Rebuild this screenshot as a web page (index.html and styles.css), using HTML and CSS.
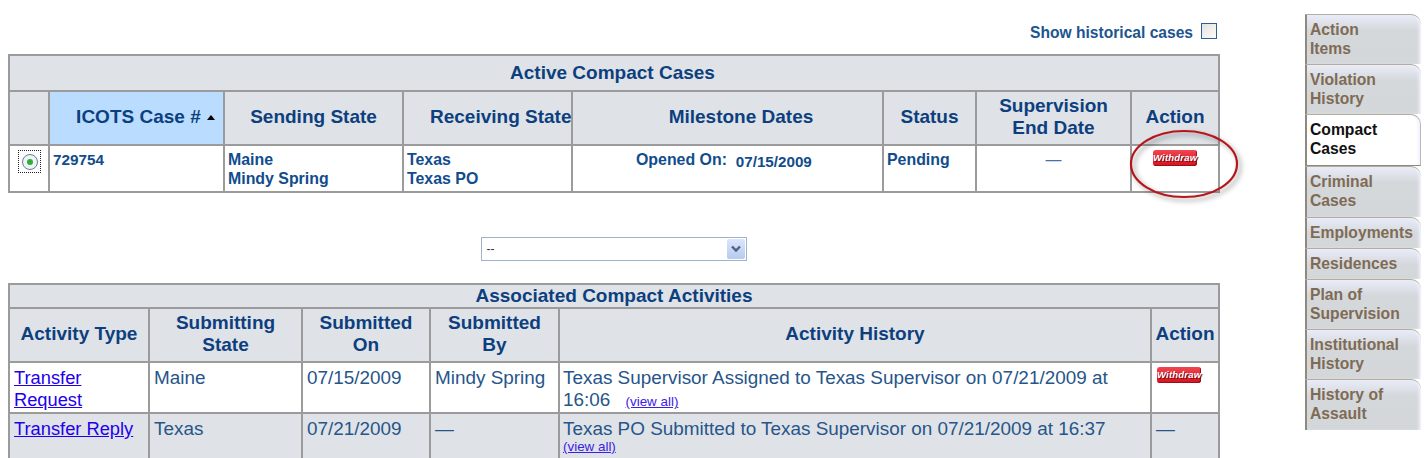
FILE: index.html
```html
<!DOCTYPE html>
<html lang="en">
<head>
<meta charset="utf-8">
<title>Compact Cases</title>
<link rel="stylesheet" href="styles.css">
</head>
<body>
<div class="page">
  <main class="main">
    <div class="historical">
      <span>Show historical cases</span>
      <span class="checkbox"></span>
    </div>

    <table class="grid cases">
      <colgroup>
        <col class="c-a1"><col class="c-a2"><col class="c-a3"><col class="c-a4"><col class="c-a5"><col class="c-a6"><col class="c-a7"><col class="c-a8">
      </colgroup>
      <thead>
        <tr class="title-row"><th colspan="8">Active Compact Cases</th></tr>
        <tr class="head-row">
          <th></th>
          <th class="sorted">ICOTS Case # <span class="sort-arrow"></span></th>
          <th>Sending State</th>
          <th class="receiving">Receiving State</th>
          <th class="off-center">Milestone Dates</th>
          <th>Status</th>
          <th>Supervision<br>End Date</th>
          <th>Action</th>
        </tr>
      </thead>
      <tbody>
        <tr class="case-row">
          <td class="radio-cell">
            <span class="radio-focus"><span class="radio"><span class="radio-dot"></span></span></span>
          </td>
          <td class="case-id">729754</td>
          <td>Maine<br>Mindy Spring</td>
          <td>Texas<br>Texas PO</td>
          <td class="milestone">Opened On:&nbsp; <span class="date">07/15/2009</span></td>
          <td>Pending</td>
          <td class="center dash">—</td>
          <td class="center"><span class="withdraw">Withdraw</span></td>
        </tr>
      </tbody>
    </table>

    <div class="select-row">
      <div class="select"><span>--</span>
        <span class="select-btn">
          <svg width="12" height="8" viewBox="0 0 12 8"><path d="M2 1.5 6 5.5 10 1.5" fill="none" stroke="#4d6185" stroke-width="2.4"/></svg>
        </span>
      </div>
    </div>

    <table class="grid activities">
      <colgroup>
        <col class="c-b1"><col class="c-b2"><col class="c-b3"><col class="c-b4"><col class="c-b5"><col class="c-b6">
      </colgroup>
      <thead>
        <tr class="title-row"><th colspan="6">Associated Compact Activities</th></tr>
        <tr class="head-row">
          <th>Activity Type</th>
          <th>Submitting<br>State</th>
          <th>Submitted<br>On</th>
          <th>Submitted<br>By</th>
          <th>Activity History</th>
          <th>Action</th>
        </tr>
      </thead>
      <tbody>
        <tr class="act-row">
          <td><a href="#">Transfer Request</a></td>
          <td>Maine</td>
          <td>07/15/2009</td>
          <td>Mindy Spring</td>
          <td class="history">Texas Supervisor Assigned to Texas Supervisor on 07/21/2009 at<br>16:06 <a class="view-all" href="#">(view all)</a></td>
          <td class="action-cell"><span class="withdraw">Withdraw</span></td>
        </tr>
        <tr class="act-row alt">
          <td><a href="#">Transfer Reply</a></td>
          <td>Texas</td>
          <td>07/21/2009</td>
          <td>—</td>
          <td class="history">Texas PO Submitted to Texas Supervisor on 07/21/2009 at 16:37<br><a class="view-all flush" href="#">(view all)</a></td>
          <td>—</td>
        </tr>
      </tbody>
    </table>
  </main>

  <nav class="tabs">
    <a class="tab" href="#">Action<br>Items</a>
    <a class="tab" href="#">Violation<br>History</a>
    <a class="tab active" href="#">Compact<br>Cases</a>
    <a class="tab" href="#">Criminal<br>Cases</a>
    <a class="tab single" href="#">Employments</a>
    <a class="tab single" href="#">Residences</a>
    <a class="tab" href="#">Plan of<br>Supervision</a>
    <a class="tab" href="#">Institutional<br>History</a>
    <a class="tab" href="#">History of<br>Assault</a>
  </nav>
</div>

<svg class="annotation" width="130" height="90" viewBox="0 0 130 90">
  <defs>
    <filter id="ring-shadow" x="-20%" y="-20%" width="140%" height="140%">
      <feDropShadow dx="3" dy="3" stdDeviation="2.5" flood-color="#000" flood-opacity=".4"/>
    </filter>
  </defs>
  <ellipse cx="59" cy="41" rx="53" ry="33" fill="none" stroke="#b5181c" stroke-width="2.2" filter="url(#ring-shadow)"/>
</svg>
</body>
</html>
```

FILE: styles.css
```css
* { box-sizing: border-box; }

html, body {
  margin: 0;
  height: 458px;
  overflow: hidden;
  background: #fff;
}

body {
  position: relative;
  font-family: "Liberation Sans", Arial, sans-serif;
  color: #0f4583;
}

.page {
  display: flex;
  align-items: flex-start;
}

.main {
  width: 1220px;
  margin-left: 8px;
  flex: none;
}

.historical {
  height: 54px;
  padding: 22px 11px 0 0;
  display: flex;
  justify-content: flex-end;
  gap: 8px;
  font-size: 15.6px;
  font-weight: bold;
  line-height: 21px;
  color: #1d5590;
}

.checkbox {
  width: 16px;
  height: 16px;
  margin-top: 1px;
  border: 1px solid #2f5f93;
  background: linear-gradient(135deg, #e3e3de, #fbfbf9);
}

.grid {
  width: 1210px;
  table-layout: fixed;
  border-collapse: collapse;
  border: 2px solid #9b9b9b;
}

.grid th, .grid td {
  border: 2px solid #9b9b9b;
  overflow: visible;
}

.grid th {
  background: #dfe3e7;
  color: #0d3f7f;
  font-weight: bold;
  text-align: center;
  vertical-align: middle;
  padding: 0 3px;
}

.title-row th { font-size: 19px; }
.head-row th { font-size: 19px; line-height: 22.5px; }

.cases .title-row { height: 36px; }
.cases .title-row th { padding-right: 6px; }
.cases .head-row { height: 54px; }
.cases .head-row th { padding-bottom: 2px; }

.c-a1 { width: 40px; }
.c-a2 { width: 175px; }
.c-a3 { width: 179px; }
.c-a4 { width: 169px; }
.c-a5 { width: 311px; }
.c-a6 { width: 93px; }
.c-a7 { width: 155px; }
.c-a8 { width: 88px; }

.grid .sorted {
  background: #b9dcff;
  text-align: right;
  padding-right: 8px;
}

.grid .off-center { padding-left: 30px; }

.grid .receiving {
  padding: 0 0 2px 26px;
  text-align: left;
  white-space: nowrap;
}

.sort-arrow {
  display: inline-block;
  width: 0;
  height: 0;
  margin: 0 0 3px 1px;
  border-left: 4px solid transparent;
  border-right: 4px solid transparent;
  border-bottom: 5px solid #000;
}

.case-row { height: 47px; }

.case-row td {
  vertical-align: top;
  padding: 4px 3px 0;
  font-size: 15.9px;
  font-weight: bold;
  line-height: 19px;
  color: #114c8c;
}

.grid .radio-cell { padding: 4px 0 0 8px; }

.grid .case-id { padding-top: 4px; font-size: 15.3px; }

.case-row .dash { font-weight: normal; color: #3f73aa; }

.radio-focus {
  display: flex;
  align-items: center;
  justify-content: center;
  width: 23px;
  height: 23px;
  border: 1px dotted #222;
}

.radio {
  display: flex;
  align-items: center;
  justify-content: center;
  width: 16px;
  height: 16px;
  border: 1.5px solid #5d7f9f;
  border-radius: 50%;
  background: #f1f3f3;
}

.radio-dot {
  width: 6px;
  height: 6px;
  border-radius: 50%;
  background: #2cae3e;
}

.center { text-align: center; }

.grid .milestone { padding-left: 63px; }

.date { font-size: 15.2px; position: relative; top: 2px; }

.withdraw {
  display: inline-block;
  width: 44px;
  height: 16px;
  border-radius: 3px;
  background: linear-gradient(#ef4650, #d8101f);
  color: #fff;
  font-size: 9.5px;
  font-weight: bold;
  font-style: italic;
  line-height: 15px;
  text-align: center;
  letter-spacing: .2px;
  vertical-align: top;
  white-space: nowrap;
  text-shadow: 1px 1px 0 #7a0a12;
  box-shadow: inset -1px -1px 0 #98101a;
}

.select-row {
  display: flex;
  justify-content: center;
  height: 90px;
  padding: 44px 9px 0 0;
}

.select {
  width: 266px;
  height: 24px;
  display: flex;
  justify-content: space-between;
  align-items: center;
  padding: 0 1px 0 5px;
  border: 1px solid #9db3cb;
  font-size: 12px;
  color: #333;
  background: #fff;
}

.select-btn {
  width: 18px;
  height: 20px;
  display: flex;
  align-items: center;
  justify-content: center;
  background: linear-gradient(#dbe6fb, #b6c9ef);
  border-radius: 2px;
}

.c-b1 { width: 140px; }
.c-b2 { width: 153px; }
.c-b3 { width: 128px; }
.c-b4 { width: 129px; }
.c-b5 { width: 592px; }
.c-b6 { width: 68px; }

.activities .title-row { height: 24px; }
.activities .head-row { height: 54px; }
.activities .head-row th { padding-bottom: 2px; }

.act-row { height: 51px; }
.act-row.alt { height: 60px; }

.act-row td {
  vertical-align: top;
  padding: 4px 3px 0 4px;
  font-size: 18.9px;
  line-height: 22px;
  color: #27558a;
  background: #fff;
}

.act-row.alt td { background: #dfe3e7; }

.act-row td.history { padding-left: 3px; }
.act-row td.action-cell { padding-left: 5px; }

.act-row a { color: #2200ee; font-size: 18.3px; }

.act-row a.view-all {
  font-size: 13.4px;
  margin-left: 10px;
  line-height: 14px;
  color: #3a20e8;
}

.act-row a.view-all.flush { margin-left: 0; display: inline-block; vertical-align: top; }

.tabs {
  display: flex;
  flex-direction: column;
  margin: 14px 0 0 77px;
  width: 116px;
  flex: none;
}

.tab {
  display: block;
  height: 50px;
  padding: 5px 0 0 3px;
  border-top: 1px solid #b5ad9c;
  border-left: 2px solid #8f8a7e;
  border-radius: 0 10px 0 0;
  background: linear-gradient(#e9ecf8 0, #d4d8db 16px, #d3d7da 100%);
  box-shadow: inset -3px 0 3px -1px #f0f2ff;
  color: #7f6b55;
  font-size: 15.7px;
  font-weight: bold;
  line-height: 19px;
  text-decoration: none;
}

.tab:nth-child(4) { height: 51px; }
.tab.single { height: 31px; }
.tab:last-child { height: 51px; }

.tab.active {
  background: #fff;
  color: #111;
  height: 52px;
  border-right: 1px solid #b9b9b9;
  border-bottom: 1px solid #8f8a7e;
}

.annotation {
  position: absolute;
  left: 1125px;
  top: 123px;
  pointer-events: none;
}
```
